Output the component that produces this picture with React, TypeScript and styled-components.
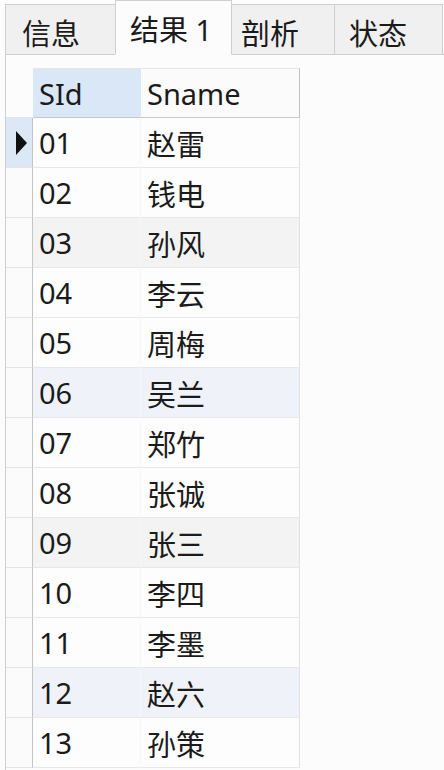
import { Fragment } from "react";
import styled, { createGlobalStyle } from "styled-components";

const GlobalStyle = createGlobalStyle`
    html, body {
        margin: 0;
        padding: 0;
        background: #fcfcfc;
    }
    body {
        font-family: "Noto Sans", "Noto Sans CJK SC", sans-serif;
        color: #1b1b1b;
    }
`;

const Window = styled.div`
    width: 444px;
    height: 770px;
    overflow: hidden;
    padding-left: 5px;
    box-sizing: border-box;
`;

const TabBar = styled.div`
    display: flex;
    align-items: flex-end;
    height: 55px;
    border-bottom: 1px solid #cfcfcf;
    box-sizing: border-box;
`;

const Tab = styled.div<{ $w: number; $pad: number; $active?: boolean }>`
    width: ${(p) => p.$w}px;
    height: ${(p) => (p.$active ? 55 : 50)}px;
    padding-left: ${(p) => p.$pad}px;
    box-sizing: border-box;
    display: flex;
    align-items: center;
    padding-top: ${(p) => (p.$active ? 0 : 4)}px;
    font-family: "Noto Sans", "Noto Sans CJK SC", sans-serif;
    font-size: 29px;
    background: ${(p) => (p.$active ? "#fcfcfc" : "#f0f0f0")};
    border: 1px solid #cfcfcf;
    border-bottom: ${(p) => (p.$active ? "1px solid #fcfcfc" : "none")};
    margin-bottom: ${(p) => (p.$active ? -1 : 0)}px;
    margin-left: -1px;
    &:first-child {
        margin-left: 0;
    }
`;

const Pane = styled.div`
    border-left: 1px solid #cfcfcf;
    padding-top: 13px;
    height: 715px;
    box-sizing: border-box;
`;

const Grid = styled.div`
    display: grid;
    grid-template-columns: 27px 108px 159px;
    width: 294px;
`;

const HeadCell = styled.div<{ $blue?: boolean; $indicator?: boolean }>`
    height: 50px;
    box-sizing: border-box;
    display: flex;
    align-items: center;
    padding-left: 6px;
    font-size: 29px;
    background: ${(p) => (p.$blue ? "#d9e7f6" : p.$indicator ? "transparent" : "#fbfbfb")};
    border-bottom: 1px solid ${(p) => (p.$indicator ? "#e4e4e4" : "#c8c8c8")};
    border-top: 1px solid ${(p) => (p.$indicator ? "transparent" : "#e6e6e6")};
    border-right: 1px solid
        ${(p) => (p.$indicator ? "transparent" : p.$blue ? "#d9e7f6" : "#c0c0c0")};
`;

const Indicator = styled.div<{ $current?: boolean }>`
    height: 50px;
    box-sizing: border-box;
    display: flex;
    align-items: center;
    padding-left: 10px;
    background: ${(p) => (p.$current ? "#dce8f5" : "#fbfbfb")};
    border-right: 1px solid #c4c4c4;
    border-bottom: 1px solid #e4e4e4;
`;

const Cell = styled.div<{ $bg: string; $last?: boolean }>`
    height: 50px;
    box-sizing: border-box;
    display: flex;
    align-items: center;
    padding-left: 6px;
    font-size: 29px;
    background: ${(p) => p.$bg};
    border-bottom: 1px solid #e8e8e8;
    border-right: 1px solid ${(p) => (p.$last ? "#e2e2e2" : "#f7f7f7")};
`;

const rows: [string, string][] = [
    ["01", "赵雷"],
    ["02", "钱电"],
    ["03", "孙风"],
    ["04", "李云"],
    ["05", "周梅"],
    ["06", "吴兰"],
    ["07", "郑竹"],
    ["08", "张诚"],
    ["09", "张三"],
    ["10", "李四"],
    ["11", "李墨"],
    ["12", "赵六"],
    ["13", "孙策"],
];

const rowBg = (i: number) => {
    if (i % 6 === 2) return "#f3f3f3";
    if (i % 6 === 5) return "#eff3f9";
    return "#fdfdfd";
};

const App: React.FC = () => {
    return (
        <>
            <GlobalStyle />
            <Window>
                <TabBar>
                    <Tab $w={111} $pad={16}>信息</Tab>
                    <Tab $w={117} $pad={14} $active>
                        结果 1
                    </Tab>
                    <Tab $w={104} $pad={9}>剖析</Tab>
                    <Tab $w={109} $pad={14}>状态</Tab>
                </TabBar>
                <Pane>
                    <Grid>
                        <HeadCell $indicator />
                        <HeadCell $blue>SId</HeadCell>
                        <HeadCell>Sname</HeadCell>
                        {rows.map(([id, name], i) => (
                            <Fragment key={id}>
                                <Indicator $current={i === 0}>
                                    {i === 0 && (
                                        <svg width="11" height="24" viewBox="0 0 11 24">
                                            <path d="M0 0 L11 12 L0 24 Z" fill="#111" />
                                        </svg>
                                    )}
                                </Indicator>
                                <Cell $bg={rowBg(i)}>{id}</Cell>
                                <Cell $bg={rowBg(i)} $last>
                                    {name}
                                </Cell>
                            </Fragment>
                        ))}
                    </Grid>
                </Pane>
            </Window>
        </>
    );
};

export default App;
